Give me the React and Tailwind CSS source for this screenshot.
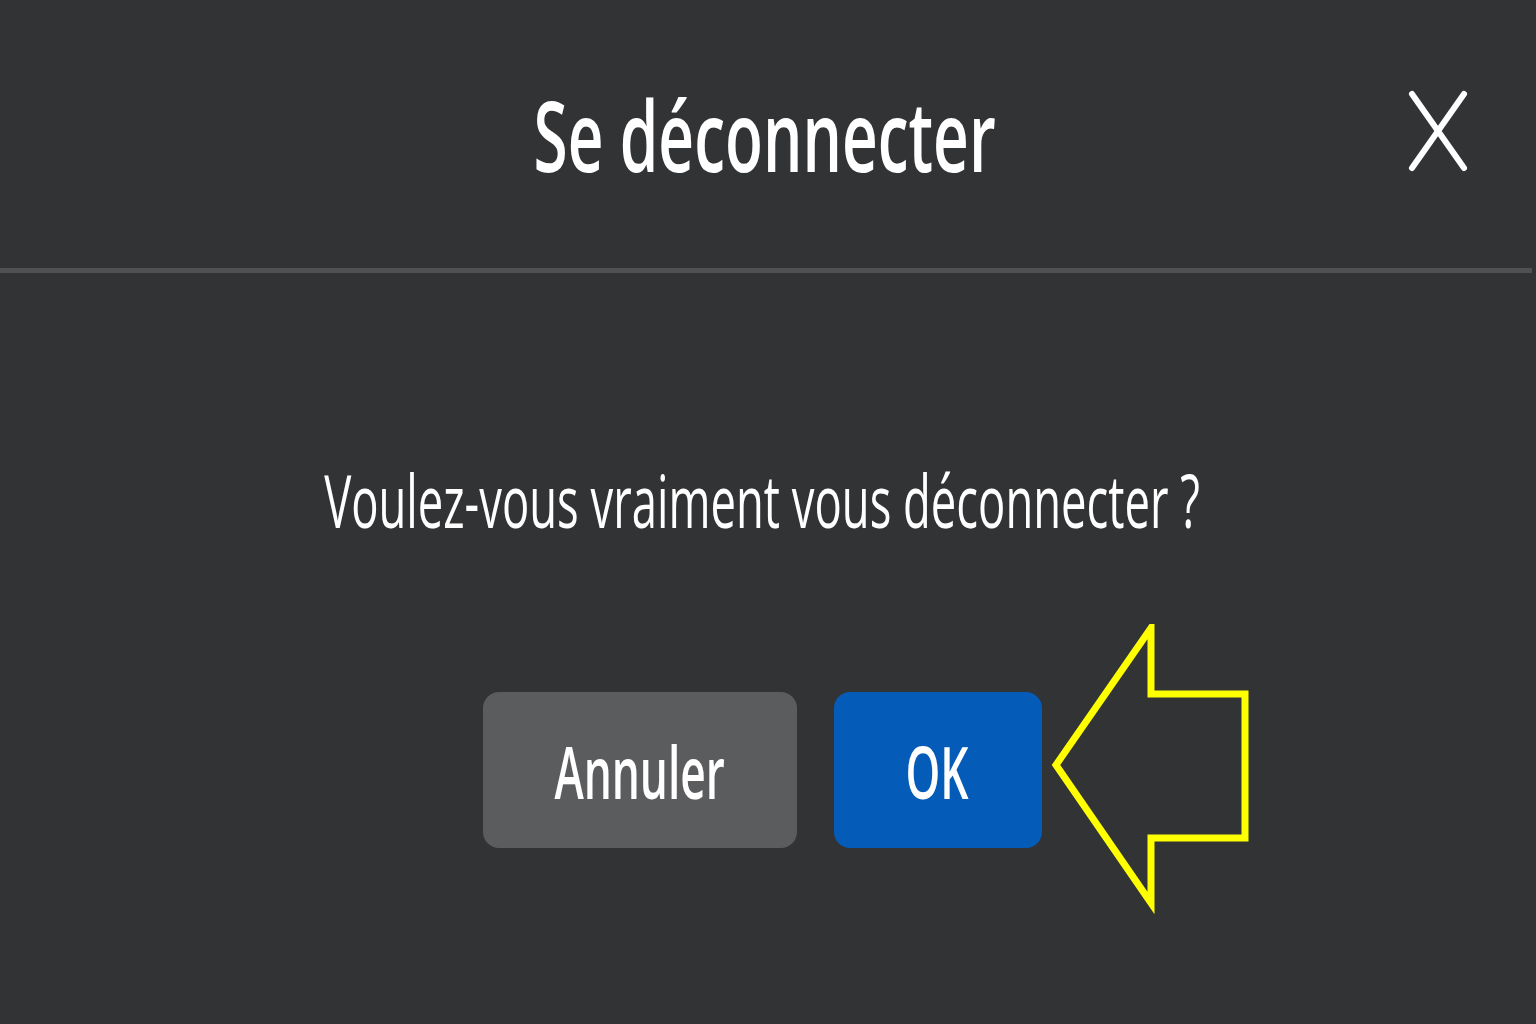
import React from "react";

function CloseIcon() {
  return (
    <svg width="60" height="82" viewBox="0 0 60 82" fill="none">
      <path d="M4 4 L56 78 M56 4 L4 78" stroke="#ffffff" strokeWidth="6" strokeLinecap="round" />
    </svg>
  );
}

function PointerArrow() {
  return (
    <svg width="206" height="292" viewBox="0 0 206 292" fill="none">
      <path
        d="M6 141 L101 4 L101 70 L195 70 L195 214 L101 214 L101 279 Z"
        stroke="#ffff00"
        strokeWidth="7"
        strokeLinejoin="miter"
      />
    </svg>
  );
}

export default function App() {
  return (
    <div className="w-[1536px] h-[1024px] bg-[#323335] text-white relative overflow-hidden font-['Open_Sans','Noto_Sans',sans-serif]">
      <header className="h-[268px] flex items-center justify-center relative">
        <h1 className="text-[98px] font-semibold leading-none scale-x-[0.634] whitespace-nowrap pr-[12px]">
          Se déconnecter
        </h1>
        <button className="absolute right-[68px] top-[90px]">
          <CloseIcon />
        </button>
      </header>
      <div className="h-[5px] bg-[#505153] mr-[4px]" />

      <div className="flex flex-col items-center pr-[12px]">
        <p className="mt-[190px] text-[73px] leading-none whitespace-nowrap scale-x-[0.622]">
          Voulez-vous vraiment vous déconnecter ?
        </p>
        <div className="mt-[156px] flex gap-[37px] relative">
          <button className="w-[314px] h-[156px] rounded-[16px] bg-[#5b5c5e] flex items-center justify-center">
            <span className="text-[73px] font-semibold leading-none scale-x-[0.606]">Annuler</span>
          </button>
          <button className="w-[208px] h-[156px] rounded-[16px] bg-[#055cb8] flex items-center justify-center">
            <span className="text-[73px] font-semibold leading-none scale-x-[0.606]">OK</span>
          </button>
          <div className="absolute left-[567px] top-[-68px]">
            <PointerArrow />
          </div>
        </div>
      </div>
    </div>
  );
}
